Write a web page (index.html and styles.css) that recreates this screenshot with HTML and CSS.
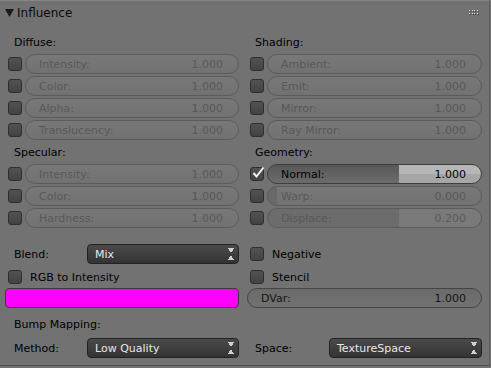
FILE: index.html
```html
<!DOCTYPE html>
<html lang="en">
<head>
    <meta charset="UTF-8">
    <meta name="viewport" content="width=device-width, initial-scale=1.0">
    <title>Influence</title>
    <link rel="stylesheet" href="styles.css">
</head>
<body>

    <div class="panel">
        <div class="panel-header">
            <svg class="arrow" width="9" height="8" viewBox="0 0 9 8"><polygon points="0,0 9,0 4.5,8" fill="#1a1a1a"/></svg>
            <span class="title">Influence</span>
            <svg class="grip" width="10" height="5" viewBox="0 0 10 5">
                <!-- drag handle dots -->
                <g fill="#3c3c3c">
                    <rect x="1" y="1" width="1" height="1"/><rect x="4" y="1" width="1" height="1"/><rect x="6" y="1" width="1" height="1"/><rect x="9" y="1" width="1" height="1"/>
                    <rect x="1" y="4" width="1" height="1"/><rect x="4" y="4" width="1" height="1"/><rect x="6" y="4" width="1" height="1"/><rect x="9" y="4" width="1" height="1"/>
                </g>
                <g fill="#e0e0e0">
                    <rect x="0" y="0" width="1" height="1"/><rect x="3" y="0" width="1" height="1"/><rect x="5" y="0" width="1" height="1"/><rect x="8" y="0" width="1" height="1"/>
                    <rect x="0" y="3" width="1" height="1"/><rect x="3" y="3" width="1" height="1"/><rect x="5" y="3" width="1" height="1"/><rect x="8" y="3" width="1" height="1"/>
                </g>
            </svg>
        </div>

        <div class="panel-body">
            <div class="col">
                <div class="heading">Diffuse:</div>
                <div class="row"><span class="check"></span><div class="field"><span>Intensity:</span><span>1.000</span></div></div>
                <div class="row"><span class="check"></span><div class="field"><span>Color:</span><span>1.000</span></div></div>
                <div class="row"><span class="check"></span><div class="field"><span>Alpha:</span><span>1.000</span></div></div>
                <div class="row"><span class="check"></span><div class="field"><span>Translucency:</span><span>1.000</span></div></div>

                <div class="heading second">Specular:</div>
                <div class="row"><span class="check"></span><div class="field"><span>Intensity:</span><span>1.000</span></div></div>
                <div class="row"><span class="check"></span><div class="field"><span>Color:</span><span>1.000</span></div></div>
                <div class="row"><span class="check"></span><div class="field"><span>Hardness:</span><span>1.000</span></div></div>

                <div class="prop first-prop">
                    <span class="prop-label">Blend:</span>
                    <div class="dropdown"><span>Mix</span><span class="updown"></span></div>
                </div>
                <div class="toggle"><span class="check"></span><span>RGB to Intensity</span></div>
                <div class="swatch"></div>
                <div class="heading bump">Bump Mapping:</div>
                <div class="prop">
                    <span class="prop-label">Method:</span>
                    <div class="dropdown"><span>Low Quality</span><span class="updown"></span></div>
                </div>
            </div>

            <div class="col right">
                <div class="heading">Shading:</div>
                <div class="row"><span class="check"></span><div class="field"><span>Ambient:</span><span>1.000</span></div></div>
                <div class="row"><span class="check"></span><div class="field"><span>Emit:</span><span>1.000</span></div></div>
                <div class="row"><span class="check"></span><div class="field"><span>Mirror:</span><span>1.000</span></div></div>
                <div class="row"><span class="check"></span><div class="field"><span>Ray Mirror:</span><span>1.000</span></div></div>

                <div class="heading second">Geometry:</div>
                <div class="row">
                    <span class="check checked">
                        <svg width="14" height="14" viewBox="0 0 14 14"><polyline points="2.5,7 5.5,10.5 12.5,1.5" fill="none" stroke="#f2f2f2" stroke-width="2"/></svg>
                    </span>
                    <div class="field slider active"><span>Normal:</span><span>1.000</span></div>
                </div>
                <div class="row"><span class="check"></span><div class="field slider warp"><span>Warp:</span><span>0.000</span></div></div>
                <div class="row"><span class="check"></span><div class="field slider displace"><span>Displace:</span><span>0.200</span></div></div>

                <div class="toggle first-prop"><span class="check"></span><span>Negative</span></div>
                <div class="toggle"><span class="check"></span><span>Stencil</span></div>
                <div class="field number"><span>DVar:</span><span>1.000</span></div>
                <div class="heading bump"></div>
                <div class="prop">
                    <span class="prop-label">Space:</span>
                    <div class="dropdown"><span>TextureSpace</span><span class="updown"></span></div>
                </div>
            </div>
        </div>
    </div>

</body>
</html>
```

FILE: styles.css
```css
body {
    margin: 0;
    background-color: #727272;
    font-family: "DejaVu Sans", sans-serif;
    font-size: 11px;
    color: #000;
}

.panel {
    width: 490px;
    height: 366px;
    box-sizing: border-box;
    border-top: 1px solid #858585;
    border-right: 1px solid #5c5c5c;
    border-bottom: 1px solid #4e4e4e;
    background-color: #727272;
}

.panel-header {
    display: flex;
    align-items: center;
    height: 23px;
    padding-left: 5px;
}

.title {
    font-size: 12px;
    margin-left: 3px;
    color: #0a0a0a;
}

.grip {
    margin-left: auto;
    margin-right: 10px;
}

.panel-body {
    display: flex;
    gap: 8px;
    padding: 9px 7px 0 5px;
}

.col {
    width: 234px;
    display: flex;
    flex-direction: column;
}

.col.right {
    flex: 1;
}

.heading {
    height: 20px;
    line-height: 20px;
    padding-left: 9px;
    margin-bottom: 1px;
}

.col.right .heading {
    padding-left: 8px;
}

.heading.second {
    margin-top: 1px;
}

.heading.bump {
    margin-top: 7px;
    margin-bottom: 3px;
}

.row {
    display: flex;
    align-items: center;
    height: 20px;
    margin-bottom: 2px;
    padding-left: 3px;
}

.check {
    width: 14px;
    height: 14px;
    flex: none;
    box-sizing: border-box;
    border: 1px solid #2f2f2f;
    border-radius: 3px;
    background: linear-gradient(#525252, #434343);
    position: relative;
}

.check svg {
    position: absolute;
    left: 0;
    top: -2px;
}

.field {
    flex: 1;
    height: 20px;
    box-sizing: border-box;
    margin-left: 3px;
    padding: 0 15px 0 13px;
    display: flex;
    justify-content: space-between;
    align-items: center;
    border: 1px solid #5b5b5b;
    border-radius: 10px;
    background: linear-gradient(#787878, #727272);
    color: #585858;
}

.field.active {
    border-color: #3e3e3e;
    color: #000;
    background:
        linear-gradient(to right, transparent 61.7%, #b6b6b6 61.7%) top / 100% 50% no-repeat,
        linear-gradient(to right, transparent 61.7%, #a6a6a6 61.7%) bottom / 100% 50% no-repeat,
        linear-gradient(#585858, #6c6c6c);
}

.field.warp {
    background:
        linear-gradient(to right, #6a6a6a 4%, transparent 4%),
        linear-gradient(#787878, #727272);
}

.field.displace {
    background:
        linear-gradient(to right, #6c6c6c 61.7%, #7a7a7a 61.7%);
}

.field.number {
    margin-left: 0;
    flex: none;
    border-color: #444;
    color: #151515;
    background: linear-gradient(#6a6a6a, #727272);
}

.first-prop {
    margin-top: 14px;
}

.prop {
    display: flex;
    align-items: center;
    height: 20px;
}

.first-prop.prop,
.toggle.first-prop {
    margin-bottom: 3px;
}

.prop-label {
    width: 82px;
    flex: none;
    box-sizing: border-box;
    padding-left: 9px;
}

.col.right .prop-label {
    padding-left: 8px;
}

.dropdown {
    flex: 1;
    height: 20px;
    box-sizing: border-box;
    display: flex;
    align-items: center;
    justify-content: space-between;
    padding: 0 4px 0 7px;
    border: 1px solid #222;
    border-radius: 4px;
    background: linear-gradient(#4a4a4a, #333);
    color: #e8e8e8;
}

.updown {
    width: 6px;
    height: 12px;
    background:
        linear-gradient(to top right, transparent 50%, #cfcfcf 50%) 0 0 / 3px 5px no-repeat,
        linear-gradient(to top left, transparent 50%, #cfcfcf 50%) 3px 0 / 3px 5px no-repeat,
        linear-gradient(to bottom right, transparent 50%, #cfcfcf 50%) 0 7px / 3px 5px no-repeat,
        linear-gradient(to bottom left, transparent 50%, #cfcfcf 50%) 3px 7px / 3px 5px no-repeat;
}

.toggle {
    display: flex;
    align-items: center;
    gap: 8px;
    height: 20px;
    padding-left: 3px;
    margin-bottom: 1px;
}

.swatch {
    height: 20px;
    box-sizing: border-box;
    border: 1px solid #3a3a3a;
    border-radius: 4px;
    background-color: #ff00ff;
}
```
